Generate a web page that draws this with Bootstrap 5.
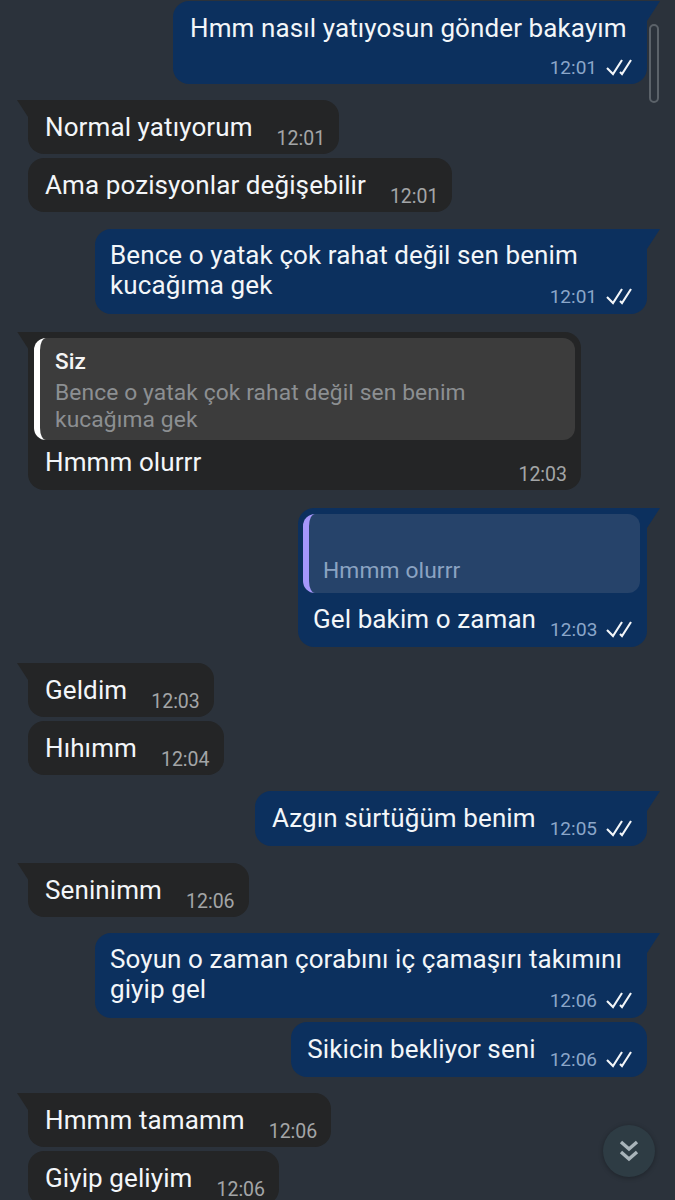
<!DOCTYPE html>
<html lang="tr">
<head>
  <meta charset="UTF-8">
  <meta name="viewport" content="width=device-width, initial-scale=1">
  <title>Sohbet</title>
  <link href="https://cdn.jsdelivr.net/npm/bootstrap@5.3.0/dist/css/bootstrap.min.css" rel="stylesheet">
  <style>
    html, body { height: 1200px; overflow: hidden; }
    body {
      background-color: #2b323b;
      font-family: Roboto, "Liberation Sans", sans-serif;
      color: #f3f6f9;
    }
    .chat-wrap { padding: 1px 28px 0 28px; height: 1200px; overflow: hidden; }
    .msg-row { margin-top: 16.5px; }
    .msg-row.same { margin-top: 3.5px; }
    .msg-row.wider { margin-top: 17.5px; }
    .msg-row.widest { margin-top: 18.5px; }
    .msg-row.first { margin-top: 0; }

    .bubble { position: relative; font-size: 26px; line-height: 30px; letter-spacing: .1px; }
    .bubble span:first-child { white-space: nowrap; }
    .bubble-in { background: #242526; border-radius: 16px; padding: 12px 14px 4px 17px; }
    .bubble-out { background: #0c305e; border-radius: 16px; padding: 12px 15px 6px 16.5px; }
    .tail-in { border-top-left-radius: 0; }
    .tail-out { border-top-right-radius: 0; }
    .tail-in::before, .tail-out::before { content: ""; position: absolute; top: 0; width: 13px; height: 20px; background: inherit; }
    .tail-in::before { left: -11px; clip-path: polygon(0 0, 100% 0, 100% 100%); }
    .tail-out::before { right: -13px; clip-path: polygon(0 0, 100% 0, 0 100%); }

    .stamp { font-size: 19px; line-height: 22px; white-space: nowrap; flex-shrink: 0; letter-spacing: 0; }
    .bubble-in .stamp { color: #a3a5a7; font-size: 19.5px; margin: 16px 0 0 24px; }
    .bubble-out .stamp { color: #8ba6c9; margin: 15px 0 0 14px; }
    .stamp svg { margin-left: 9px; vertical-align: -2px; }

    .w-first { width: 474px; }
    .w-wide { width: 552px; }
    .w-quote-in { width: 553px; }
    .w-quote-out { width: 349px; }
    .bubble-out.two-line { padding-top: 11px; padding-left: 15px; }
    .bubble-out.two-line .stamp { margin: -14px 0 0 0; }
    .bubble-out.w-first { padding: 11.5px 15px 4.5px 17px; }
    .bubble-out.w-first .stamp { margin: 14.5px 0 0 0; }

    .bubble-in.has-quote { padding: 6px 6px 4px 6px; }
    .bubble-out.has-quote { padding: 6px 7px 5.5px 5px; }
    .quote-box { border-radius: 12px; overflow: hidden; font-size: 22.8px; line-height: 27px; }
    .bubble-in .quote-box { background: #3c3c3c; border-left: 6px solid #fff; color: #8c8f92; padding: 10px 14px 8px 15px; height: 102px; }
    .bubble-out .quote-box { background: #26436a; border-left: 6px solid #a597fb; color: #8ba3c2; padding: 43px 14px 8px 14px; height: 79px; }
    .quote-name { color: #f5f5f5; font-weight: 500; font-size: 22.5px; line-height: 27px; margin-bottom: 4px; }
    .bubble-in.has-quote .reply-line { padding: 7px 8px 0 11px; }
    .bubble-out.has-quote .reply-line { padding: 11px 8px 0 10px; }
    .bubble-in.has-quote .stamp { margin: 17px 0 0 0; }
    .bubble-out.has-quote .stamp { margin: 15px 0 0 14px; }
    .has-quote .reply-line > span:first-child { flex-grow: 1; }

    .scroll-thumb { position: absolute; left: 649px; top: 24px; width: 10px; height: 79px; border: 2px solid #5b6269; border-radius: 5px; }
    .jump-btn { position: absolute; left: 603px; top: 1125px; width: 52px; height: 52px; border-radius: 50%; background: #2e3c44; box-shadow: 0 1px 5px rgba(0,0,0,.3); }
  </style>
</head>
<body class="position-relative">
  <div class="chat-wrap">

    <div class="msg-row first d-flex justify-content-end">
      <div class="bubble bubble-out tail-out w-first">
        <div>Hmm nasıl yatıyosun gönder bakayım</div>
        <div class="stamp text-end">12:01<svg width="26" height="18" viewBox="0 0 26 18" fill="none" stroke="#f3f6f9" stroke-width="2.1"><path d="M1 10l6 6L16 2"/><path d="M14 14l2 2L25 2"/></svg></div>
      </div>
    </div>

    <div class="msg-row d-flex">
      <div class="bubble bubble-in tail-in d-flex">
        <span>Normal yatıyorum</span><span class="stamp">12:01</span>
      </div>
    </div>
    <div class="msg-row same d-flex">
      <div class="bubble bubble-in d-flex">
        <span>Ama pozisyonlar değişebilir</span><span class="stamp">12:01</span>
      </div>
    </div>

    <div class="msg-row wider d-flex justify-content-end">
      <div class="bubble bubble-out tail-out two-line w-wide">
        <div>Bence o yatak çok rahat değil sen benim<br>kucağıma gek</div>
        <div class="stamp text-end">12:01<svg width="26" height="18" viewBox="0 0 26 18" fill="none" stroke="#f3f6f9" stroke-width="2.1"><path d="M1 10l6 6L16 2"/><path d="M14 14l2 2L25 2"/></svg></div>
      </div>
    </div>

    <div class="msg-row wider d-flex">
      <div class="bubble bubble-in tail-in has-quote w-quote-in">
        <div class="quote-box">
          <div class="quote-name">Siz</div>
          <div>Bence o yatak çok rahat değil sen benim<br>kucağıma gek</div>
        </div>
        <div class="reply-line d-flex">
          <span>Hmmm olurrr</span><span class="stamp">12:03</span>
        </div>
      </div>
    </div>

    <div class="msg-row widest d-flex justify-content-end">
      <div class="bubble bubble-out tail-out has-quote w-quote-out">
        <div class="quote-box">Hmmm olurrr</div>
        <div class="reply-line d-flex">
          <span>Gel bakim o zaman</span><span class="stamp">12:03<svg width="26" height="18" viewBox="0 0 26 18" fill="none" stroke="#f3f6f9" stroke-width="2.1"><path d="M1 10l6 6L16 2"/><path d="M14 14l2 2L25 2"/></svg></span>
        </div>
      </div>
    </div>

    <div class="msg-row d-flex">
      <div class="bubble bubble-in tail-in d-flex">
        <span>Geldim</span><span class="stamp">12:03</span>
      </div>
    </div>
    <div class="msg-row same d-flex">
      <div class="bubble bubble-in d-flex">
        <span>Hıhımm</span><span class="stamp">12:04</span>
      </div>
    </div>

    <div class="msg-row d-flex justify-content-end">
      <div class="bubble bubble-out tail-out d-flex">
        <span>Azgın sürtüğüm benim</span><span class="stamp">12:05<svg width="26" height="18" viewBox="0 0 26 18" fill="none" stroke="#f3f6f9" stroke-width="2.1"><path d="M1 10l6 6L16 2"/><path d="M14 14l2 2L25 2"/></svg></span>
      </div>
    </div>

    <div class="msg-row d-flex">
      <div class="bubble bubble-in tail-in d-flex">
        <span>Seninimm</span><span class="stamp">12:06</span>
      </div>
    </div>

    <div class="msg-row d-flex justify-content-end">
      <div class="bubble bubble-out tail-out two-line w-wide">
        <div>Soyun o zaman çorabını iç çamaşırı takımını<br>giyip gel</div>
        <div class="stamp text-end">12:06<svg width="26" height="18" viewBox="0 0 26 18" fill="none" stroke="#f3f6f9" stroke-width="2.1"><path d="M1 10l6 6L16 2"/><path d="M14 14l2 2L25 2"/></svg></div>
      </div>
    </div>
    <div class="msg-row same d-flex justify-content-end">
      <div class="bubble bubble-out d-flex">
        <span>Sikicin bekliyor seni</span><span class="stamp">12:06<svg width="26" height="18" viewBox="0 0 26 18" fill="none" stroke="#f3f6f9" stroke-width="2.1"><path d="M1 10l6 6L16 2"/><path d="M14 14l2 2L25 2"/></svg></span>
      </div>
    </div>

    <div class="msg-row d-flex">
      <div class="bubble bubble-in tail-in d-flex">
        <span>Hmmm tamamm</span><span class="stamp">12:06</span>
      </div>
    </div>
    <div class="msg-row same d-flex">
      <div class="bubble bubble-in d-flex">
        <span>Giyip geliyim</span><span class="stamp">12:06</span>
      </div>
    </div>

  </div>

  <div class="scroll-thumb"></div>
  <div class="jump-btn d-flex align-items-center justify-content-center">
    <svg width="22" height="24" viewBox="0 0 22 24" fill="none" stroke="#a9b4ba" stroke-width="3.4"><path d="M3 3l8 7 8-7"/><path d="M3 13l8 7 8-7"/></svg>
  </div>

  <script src="https://cdn.jsdelivr.net/npm/bootstrap@5.3.0/dist/js/bootstrap.bundle.min.js"></script>
</body>
</html>
